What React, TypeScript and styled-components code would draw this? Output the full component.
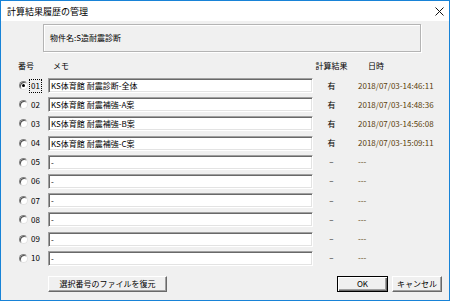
import styled, { createGlobalStyle } from 'styled-components';

const GlobalStyle = createGlobalStyle`
  html, body {
    margin: 0;
    padding: 0;
    background: #f0f0f0;
  }
  body {
    font-family: 'Noto Sans CJK JP', 'Noto Sans', sans-serif;
    color: #000;
  }
`;

type HistoryRow = {
    no: string;
    memo: string;
    result: string;
    date: string;
};

const rows: HistoryRow[] = [
    { no: '01', memo: 'KS体育館 耐震診断-全体', result: '有', date: '2018/07/03-14:46:11' },
    { no: '02', memo: 'KS体育館 耐震補強-A案', result: '有', date: '2018/07/03-14:48:36' },
    { no: '03', memo: 'KS体育館 耐震補強-B案', result: '有', date: '2018/07/03-14:56:08' },
    { no: '04', memo: 'KS体育館 耐震補強-C案', result: '有', date: '2018/07/03-15:09:11' },
    { no: '05', memo: '-', result: '–', date: '---' },
    { no: '06', memo: '-', result: '–', date: '---' },
    { no: '07', memo: '-', result: '–', date: '---' },
    { no: '08', memo: '-', result: '–', date: '---' },
    { no: '09', memo: '-', result: '–', date: '---' },
    { no: '10', memo: '-', result: '–', date: '---' },
];

export default function App() {
    return (
        <>
            <GlobalStyle />
            <Window>
                <TitleBar>
                    <Title>計算結果履歴の管理</Title>
                    <CloseIcon width='9' height='9' viewBox='0 0 9 9'>
                        <path d='M0.5 0.5 L8.5 8.5 M8.5 0.5 L0.5 8.5' stroke='#111' strokeWidth='1' />
                    </CloseIcon>
                </TitleBar>
                <Body>
                    <HeaderBox>物件名:S造耐震診断</HeaderBox>
                    <HeadRow>
                        <span>番号</span>
                        <MemoHead>メモ</MemoHead>
                        <Result>計算結果</Result>
                        <DateHead>日時</DateHead>
                    </HeadRow>
                    <RowList>
                        {rows.map((row, i) => (
                            <Row key={row.no}>
                                <Selector>
                                    <Radio $checked={i === 0} />
                                    <NumberLabel $focused={i === 0}>{row.no}</NumberLabel>
                                </Selector>
                                <MemoInput readOnly defaultValue={row.memo} />
                                <Result>{row.result}</Result>
                                <DateText>{row.date}</DateText>
                            </Row>
                        ))}
                    </RowList>
                    <Footer>
                        <RestoreButton>選択番号のファイルを復元</RestoreButton>
                        <Spacer />
                        <DialogButton $default $width={51}>
                            OK
                        </DialogButton>
                        <DialogButton $width={50}>キャンセル</DialogButton>
                    </Footer>
                </Body>
            </Window>
        </>
    );
}

const Window = styled.div`
    width: 450px;
    height: 301px;
    box-sizing: border-box;
    border: 1px solid #1883d7;
    display: flex;
    flex-direction: column;
    background: #f0f0f0;
`;

const TitleBar = styled.div`
    height: 20px;
    flex-shrink: 0;
    background: #fff;
    display: flex;
    align-items: center;
    justify-content: space-between;
    padding: 0 5px 0 6px;
`;

const Title = styled.span`
    font-size: 9px;
    line-height: 1;
`;

const CloseIcon = styled.svg`
    display: block;
`;

const Body = styled.div`
    flex: 1;
    display: flex;
    flex-direction: column;
    padding: 3px 7px 0 0;
    font-size: 8px;
    line-height: 1;
`;

const HeaderBox = styled.div`
    margin-left: 42px;
    width: 378px;
    height: 28px;
    box-sizing: border-box;
    border: 1px solid #b4b4b4;
    box-shadow: inset 1px 1px 0 #fff, 1px 1px 0 #fff;
    display: flex;
    align-items: center;
    padding-left: 6px;
`;

const columns = '30px 265px 37px 1fr';

const HeadRow = styled.div`
    display: grid;
    grid-template-columns: ${columns};
    align-items: center;
    margin: 8px 0 0 17px;
    height: 12px;
`;

const MemoHead = styled.span`
    padding-left: 5px;
`;

const DateHead = styled.span`
    padding-left: 18px;
`;

const RowList = styled.div`
    display: grid;
    row-gap: 4.2px;
    margin: 6px 0 0 17px;
`;

const Row = styled.div`
    display: grid;
    grid-template-columns: ${columns};
    align-items: center;
    height: 15px;
`;

const Selector = styled.div`
    display: flex;
    align-items: center;
`;

const Radio = styled.span<{ $checked: boolean }>`
    position: relative;
    width: 9px;
    height: 9px;
    margin-left: 1px;
    box-sizing: border-box;
    border-radius: 50%;
    border: 1px solid;
    border-color: #808080 #e3e3e3 #e3e3e3 #808080;
    background: #fff;
    box-shadow: inset 1px 1px 0 #505050;

    &::after {
        content: '';
        display: ${({ $checked }) => ($checked ? 'block' : 'none')};
        position: absolute;
        left: 2px;
        top: 2px;
        width: 3px;
        height: 3px;
        border-radius: 50%;
        background: #000;
    }
`;

const NumberLabel = styled.span<{ $focused: boolean }>`
    margin-left: 1px;
    padding: 2px 1px;
    border: 1px dotted ${({ $focused }) => ($focused ? '#000' : 'transparent')};
`;

const MemoInput = styled.input`
    width: 100%;
    height: 15px;
    box-sizing: border-box;
    margin: 0;
    padding: 0 2px;
    border: 1px solid;
    border-color: #a0a0a0 #fff #fff #a0a0a0;
    box-shadow: inset 1px 1px 0 #696969, inset -1px -1px 0 #e3e3e3;
    background: #fff;
    font-family: inherit;
    font-size: 8px;
    color: #000;
    outline: none;
`;

const Result = styled.span`
    text-align: center;
`;

const DateText = styled.span`
    padding-left: 8px;
    color: #5a3f0c;
`;

const Footer = styled.div`
    display: flex;
    margin-top: 10px;
    height: 16px;
`;

const Spacer = styled.div`
    flex: 1;
`;

const buttonBase = `
    box-sizing: border-box;
    height: 16px;
    margin: 0;
    padding: 0;
    background: #f0f0f0;
    font-family: inherit;
    font-size: 8px;
    line-height: 1;
    color: #000;
    display: flex;
    align-items: center;
    justify-content: center;
`;

const RestoreButton = styled.button`
    ${buttonBase}
    margin-left: 47px;
    width: 119px;
    border: 1px solid;
    border-color: #fff #696969 #696969 #fff;
    box-shadow: inset -1px -1px 0 #a0a0a0;
`;

const DialogButton = styled.button<{ $default?: boolean; $width: number }>`
    ${buttonBase}
    width: ${({ $width }) => $width}px;
    margin-left: 4px;
    border: 1px solid;
    border-color: ${({ $default }) => ($default ? '#000' : '#fff #696969 #696969 #fff')};
    box-shadow: ${({ $default }) =>
        $default
            ? 'inset 1px 1px 0 #fff, inset -1px -1px 0 #696969, inset -2px -2px 0 #a0a0a0'
            : 'inset -1px -1px 0 #a0a0a0'};
`;
